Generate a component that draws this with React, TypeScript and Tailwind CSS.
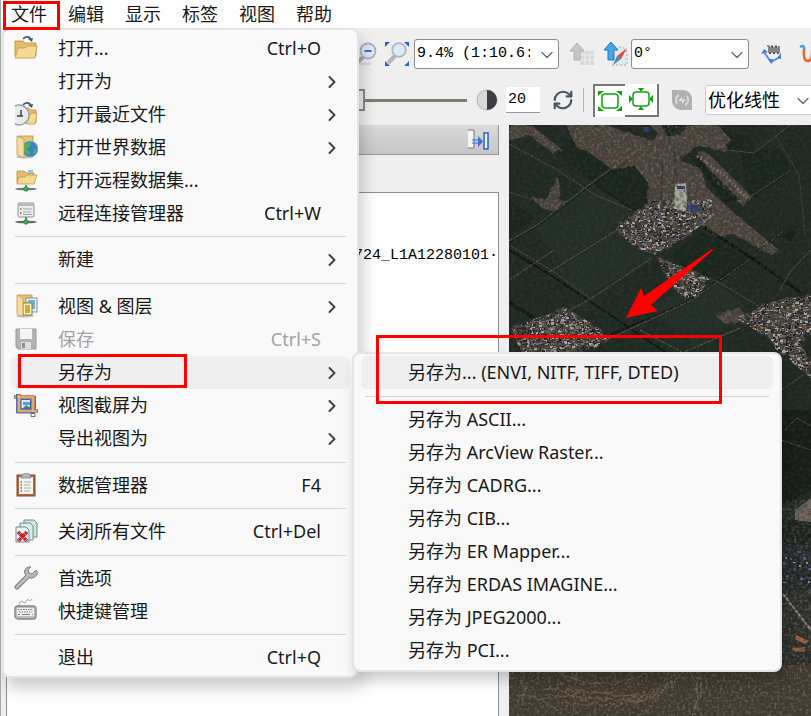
import React from "react";
import { ChevronDown, ChevronRight, RefreshCw } from "lucide-react";

type IconName =
  | "open" | "recent" | "world" | "remote" | "server" | "layers"
  | "save" | "crop" | "clipboard" | "closeAll" | "wrench" | "keyboard";

type Entry =
  | { kind: "rule"; wide?: boolean }
  | {
      kind: "item";
      label: string;
      icon?: IconName;
      keys?: string;
      sub?: boolean;
      disabled?: boolean;
      active?: boolean;
    };

const MENUS = ["文件", "编辑", "显示", "标签", "视图", "帮助"];

const FILE_MENU: Entry[] = [
  { kind: "item", label: "打开...", icon: "open", keys: "Ctrl+O" },
  { kind: "item", label: "打开为", sub: true },
  { kind: "item", label: "打开最近文件", icon: "recent", sub: true },
  { kind: "item", label: "打开世界数据", icon: "world", sub: true },
  { kind: "item", label: "打开远程数据集...", icon: "remote" },
  { kind: "item", label: "远程连接管理器", icon: "server", keys: "Ctrl+W" },
  { kind: "rule" },
  { kind: "item", label: "新建", sub: true },
  { kind: "rule", wide: true },
  { kind: "item", label: "视图 & 图层", icon: "layers", sub: true },
  { kind: "item", label: "保存", icon: "save", keys: "Ctrl+S", disabled: true },
  { kind: "item", label: "另存为", sub: true, active: true },
  { kind: "item", label: "视图截屏为", icon: "crop", sub: true },
  { kind: "item", label: "导出视图为", sub: true },
  { kind: "rule", wide: true },
  { kind: "item", label: "数据管理器", icon: "clipboard", keys: "F4" },
  { kind: "rule" },
  { kind: "item", label: "关闭所有文件", icon: "closeAll", keys: "Ctrl+Del" },
  { kind: "rule", wide: true },
  { kind: "item", label: "首选项", icon: "wrench" },
  { kind: "item", label: "快捷键管理", icon: "keyboard" },
  { kind: "rule" },
  { kind: "item", label: "退出", keys: "Ctrl+Q" },
];

const SAVE_AS_MENU: Entry[] = [
  { kind: "item", label: "另存为... (ENVI, NITF, TIFF, DTED)", active: true },
  { kind: "rule", wide: true },
  { kind: "item", label: "另存为 ASCII..." },
  { kind: "item", label: "另存为 ArcView Raster..." },
  { kind: "item", label: "另存为 CADRG..." },
  { kind: "item", label: "另存为 CIB..." },
  { kind: "item", label: "另存为 ER Mapper..." },
  { kind: "item", label: "另存为 ERDAS IMAGINE..." },
  { kind: "item", label: "另存为 JPEG2000..." },
  { kind: "item", label: "另存为 PCI..." },
];

function Folder() {
  return (
    <>
      <path d="M1 5h8l2 2h11v13H1z" fill="#e3bd6a" stroke="#b98f3f" strokeWidth=".8" />
      <path d="M4 12h7l2-2h10l-2 12H1z" fill="#f4d894" stroke="#c29a4b" strokeWidth=".8" />
    </>
  );
}

function MenuIcon({ name }: { name: IconName }) {
  return (
    <svg viewBox="0 0 24 24" className="size-6" fill="none" aria-hidden="true">
      {name === "open" && (
        <>
          <Folder />
          <path d="M9 3c2-3 7-3 8 1" stroke="#4a5a70" strokeWidth="1.6" />
          <path d="M14 3l5-1-1 4z" fill="#4a5a70" />
        </>
      )}
      {name === "recent" && (
        <>
          <path d="M9 6h6l2 2h5v13H9z" fill="#e3bd6a" stroke="#b98f3f" strokeWidth=".8" />
          <path d="M13 13h3l2-2h5l-2 11h-9z" fill="#f4d894" stroke="#c29a4b" strokeWidth=".8" />
          <path d="M9 3c2-3 7-3 8 1" stroke="#4a5a70" strokeWidth="1.6" />
          <path d="M14 3l5-1-1 4z" fill="#4a5a70" />
          <path d="M1 4a11 10 0 0 1 4-1 9.500 9.500 0 0 1 0 20 11 10 0 0 1-4-1z" fill="#e6ebeb" />
          <path d="M1 4q2-1 4-1a9.500 9.500 0 0 1 0 20q-2 0-4-1" stroke="#98a3a3" strokeWidth="1.4" />
          <path d="M7 8v6M3 14h6" stroke="#444" strokeWidth="1.500" />
        </>
      )}
      {name === "world" && (
        <>
          <ellipse cx="11" cy="22" rx="9" ry="1.500" fill="#8a8a8a" opacity=".5" />
          <path d="M4 1h15v18H7z" fill="#ecc77a" stroke="#b98f3f" strokeWidth=".8" />
          <circle cx="16" cy="14" r="8" fill="#3d83c4" stroke="#8ab6dc" strokeWidth=".7" />
          <path d="M13 8c3-2 5 0 4 2s-4 2-4 4 3 1 3 4-3 2-5-1-2-7 2-9zM20 14c2-1 3 1 2 3s-3 2-3 0z" fill="#4fb357" />
          <path d="M3 1l7 3v19l-7-3z" fill="#f6dc9c" stroke="#c29a4b" strokeWidth=".8" />
        </>
      )}
      {name === "remote" && (
        <>
          <path d="M3 3h7l2 2h8v10H3z" fill="#e3bd6a" stroke="#b98f3f" strokeWidth=".8" />
          <path d="M14 2h5v3h-5z" fill="#8cc3ea" />
          <path d="M5 9h6l2-2h10l-3 9H3z" fill="#f4d894" stroke="#c29a4b" strokeWidth=".8" />
          <path d="M12 17v4" stroke="#555" strokeWidth="1.400" />
          <ellipse cx="12" cy="21" rx="11" ry="1.300" fill="#777" />
          <circle cx="12" cy="21" r="2.300" fill="#35b34a" stroke="#20702e" strokeWidth=".6" />
        </>
      )}
      {name === "server" && (
        <>
          <rect x="4" y="2" width="16" height="14" rx="1" fill="#e9ebec" stroke="#8f9496" />
          <path d="M5 4h14" stroke="#b6babc" strokeWidth="2" />
          <path d="M9 8h9M9 11h8M9 13.500h9" stroke="#9a9fa2" strokeWidth=".9" />
          <path d="M6 8h1.500" stroke="#3b9b45" strokeWidth="1.600" />
          <path d="M6 12h1.500" stroke="#d03c3c" strokeWidth="1.600" />
          <path d="M12 16v5" stroke="#555" strokeWidth="1.600" />
          <ellipse cx="12" cy="21" rx="11" ry="1.300" fill="#666" />
          <circle cx="12" cy="21" r="2.300" fill="#35b34a" stroke="#20702e" strokeWidth=".6" />
        </>
      )}
      {name === "layers" && (
        <>
          <ellipse cx="11" cy="22" rx="9" ry="1.500" fill="#8a8a8a" opacity=".5" />
          <path d="M4 1h14v17H6z" fill="#e8c276" stroke="#b98f3f" strokeWidth=".8" />
          <rect x="12" y="4" width="11" height="14" fill="#e8f1f6" stroke="#7d95a6" />
          <rect x="14" y="6" width="7" height="9" fill="#6fb2d8" />
          <rect x="9" y="9" width="9" height="12" fill="#fff4c4" stroke="#8c7c38" />
          <path d="M11 11h5v8h-5z" fill="#d5a82a" />
          <path d="M3 1l6 3v19l-6-3z" fill="#f6dc9c" stroke="#c29a4b" strokeWidth=".8" />
        </>
      )}
      {name === "save" && (
        <>
          <path d="M2 2h20v20H4l-2-2z" fill="#b3b3b3" stroke="#9a9a9a" />
          <rect x="6" y="2" width="12" height="10" fill="#f3f3f3" />
          <rect x="7" y="15" width="10" height="7" fill="#dedede" />
          <rect x="8" y="16" width="3" height="5" fill="#8e8e8e" />
        </>
      )}
      {name === "crop" && (
        <>
          <rect x="7" y="7" width="11" height="10" fill="#d9ecf6" />
          <path d="M8 16l4-4 3 2 2-2v4z" fill="#3f8a6a" />
          <path d="M9 9h7v3H9z" fill="#5c9ed0" />
          <path d="M0 4h19v16M5 1v17h19" stroke="#a8683a" strokeWidth="3.600" />
          <path d="M1 4h18v15M5 2v16h18" stroke="#eebc88" strokeWidth="1.600" />
          <path d="M7 7v9h9.500V6.500H7" stroke="#3a62b4" />
          <path d="M2.500 1v19h17M21.500 3v13M17 20.500h4v3h-4z" stroke="#3c62ad" strokeWidth=".9" />
        </>
      )}
      {name === "clipboard" && (
        <>
          <rect x="3" y="2" width="18" height="21" fill="#b3683c" stroke="#84472a" />
          <path d="M5 4h14v17H5z" fill="#f5f5f2" />
          <path d="M8 2c0-2 8-2 8 0l1 3H7z" fill="#b5b8ba" stroke="#818487" strokeWidth=".8" />
          <path d="M10 9h7M10 12h6M10 15h7M10 18h6" stroke="#9a9a9a" strokeWidth=".8" />
          <path d="M6.500 9H8" stroke="#3a9a44" strokeWidth="1.600" />
          <path d="M6.500 12H8M6.500 18H8" stroke="#d0473c" strokeWidth="1.600" />
          <path d="M6.500 15H8" stroke="#3b62c4" strokeWidth="1.600" />
        </>
      )}
      {name === "closeAll" && (
        <>
          <path d="M10 1h10l3 3v14H10z" fill="#cfe3e3" stroke="#6f8c8c" />
          <path d="M6 4h10l3 3v14H6z" fill="#d9ebeb" stroke="#6f8c8c" />
          <path d="M2 8h10l3 3v12H2z" fill="#e6f3f3" stroke="#6f8c8c" />
          <path d="M4 13l9 9M13 13l-9 9" stroke="#c8232b" strokeWidth="3.600" strokeDasharray="2.500 .4" />
        </>
      )}
      {name === "wrench" && (
        <>
          <path d="M3 21L15 9" stroke="#7d7d7d" strokeWidth="5" strokeLinecap="round" />
          <path d="M22 4l-4 4-3-1-1-3 3-3c-4-1-8 3-6 7s7 6 11 2c2-2 2-4 0-6z" fill="#b4b4b4" stroke="#7d7d7d" strokeWidth=".9" />
          <path d="M3 21L15 9" stroke="#bdbdbd" strokeWidth="3" strokeLinecap="round" />
        </>
      )}
      {name === "keyboard" && (
        <>
          <path d="M5 7c0-4 2-6 4-4s3 0 4-2 3 3 5-1" stroke="#9b9b9b" />
          <rect x="1" y="7" width="21" height="13" rx="3" fill="#bdbdbd" stroke="#858585" strokeWidth="1.300" />
          <rect x="3" y="9" width="17" height="8" rx="1" fill="#ededed" />
          <path d="M4 10.500h15M5 13h13" stroke="#808080" strokeWidth="1.200" strokeDasharray="1.500 1" />
          <path d="M4 15.500h2M8 15.500h8M18 15.500h1" stroke="#808080" strokeWidth="1.200" />
        </>
      )}
    </svg>
  );
}

function MenuRows({ entries }: { entries: Entry[] }) {
  return (
    <>
      {entries.map((e, i) =>
        e.kind === "rule" ? (
          <div
            key={i}
            role="separator"
            className={e.wide ? "mx-1 flex h-[14px] items-center" : "mx-1 flex h-[13px] items-center"}
          >
            <div className="h-px flex-1 bg-[#d6d6d6]" />
          </div>
        ) : (
          <button
            key={i}
            type="button"
            role="menuitem"
            disabled={e.disabled}
            className={
              "flex h-[33px] w-full items-center rounded-md pb-0.5 pl-[3px] text-left text-lg leading-6 whitespace-nowrap " +
              (e.active ? "bg-[#efefef] " : "") +
              (e.disabled ? "text-[#a3a3a3]" : "text-[#1a1a1a]")
            }
          >
            <span className="mr-5 w-6 shrink-0">{e.icon && <MenuIcon name={e.icon} />}</span>
            <span className="flex-1">{e.label}</span>
            {e.keys && <span className="mr-[29px]">{e.keys}</span>}
            {e.sub && <ChevronRight className="mt-0.5 mr-2 size-5 text-[#444]" strokeWidth={2.4} />}
          </button>
        )
      )}
    </>
  );
}

/* Deterministic pseudo-random numbers, so the terrain looks the same on each render. */
function makeRandom(seed: number) {
  let s = seed;
  return () => {
    s = (s * 16807) % 2147483647;
    return s / 2147483647;
  };
}

/* One path of small roof-sized blocks per colour, scattered over the whole map. */
const HOUSE_COLORS = ["#8a837b", "#2f3a66", "#6b6259", "#1b1b1b", "#5a4d44", "#77706a", "#262626", "#aaa6a2", "#3a3530"];
const HOUSES = HOUSE_COLORS.map((color, k) => {
  const r = makeRandom(77 + k * 991);
  let d = "";
  for (let i = 0; i < 2200; i++) {
    const x = 509 + Math.floor(r() * 302);
    const y = 190 + Math.floor(r() * 190);
    const w = 1 + Math.floor(r() * 3);
    const h = 1 + Math.floor(r() * 2);
    d += `M${x} ${y}h${w}v${h}h-${w}z`;
  }
  return { color, d };
});

const VILLAGES =
  "M614 229l38-28 60-2 2 16-18 14-40 26-20-7zM656 256l14 6 40 16-12 18-14 2-12-12-10-18zM510 328l56-20 34 21 8 12-42 20h-40zM736 318l36-16 39-7v38l-20 14-20-7zM766 330l30 8 15 22v18l-36-30z";

const SOIL =
  "M509 125h22l30 24-8 4-24-18-20 6zM566 125h38l50 16 4-8-8-8h68l12 14-6 12-28-6-16 16 22 8 4 18 28 26 46 38-8 4-38-20-18 2-20-16-8-2-2-10-16-2-14 14-10-2 2-36-14-18-20 6-24-18-14-6zM697 152l12 2 44 44-12 6-24-20zM531 197l16 2 10-22 4 14-4 8 12 2-16 10-10-2zM714 315l26-8 8 14-24 2z";

const ROADS: { d: string; w: number; c: string }[] = [
  { d: "M509 144l47 25 39 26 44 18", w: 1, c: "#5b5248" },
  { d: "M509 241l28-16 57-44 42-30", w: 1, c: "#665c50" },
  { d: "M509 243l28-16 57-44 42-28", w: 1, c: "#10150f" },
  { d: "M509 250l40 24 39 26 77 52", w: 2, c: "#0c110d" },
  { d: "M511 246l40 24 39 28", w: 1, c: "#544c43" },
  { d: "M549 272l70-43", w: 1, c: "#6a6054" },
  { d: "M509 280l45-30M570 310l22-12 60-40", w: 1, c: "#665c50" },
  { d: "M588 344l100-42 60-42 33-27", w: 2, c: "#0c110d" },
  { d: "M600 343l90-42 60-42 33-28", w: 1, c: "#6a6054" },
  { d: "M715 280l42 25 20 18", w: 1, c: "#59514a" },
  { d: "M745 200l46-30M790 125l-36 28-28-3", w: 1, c: "#5a5248" },
  { d: "M775 135l24 40 6 60", w: 1, c: "#3e453d" },
  { d: "M704 227l52 34 45 32", w: 3, c: "#0c110d" },
  { d: "M509 302l34 22", w: 4, c: "#0f150f" },
  { d: "M780 290l10-18 21-22", w: 1, c: "#625a4f" },
  { d: "M509 192l24 8", w: 1, c: "#4b4239" },
  { d: "M594 183l50 34", w: 1, c: "#0c110d" },
  { d: "M640 330l42 22M740 328l-56 24", w: 1, c: "#6a6054" },
  { d: "M785 430l12-12 14 8M781 390l30-20M781 440l30 10", w: 1, c: "#55504a" },
];

function SatelliteMap() {
  return (
    <svg
      viewBox="509 125 302 591"
      preserveAspectRatio="xMinYMin slice"
      className="block h-full w-full"
      role="img"
      aria-label="卫星影像"
    >
      <defs>
        <filter id="light" x="0" y="0" width="100%" height="100%">
          <feTurbulence type="fractalNoise" baseFrequency="0.35" numOctaves="3" seed="4" />
          <feColorMatrix values="0 0 0 0 0.6  0 0 0 0 0.53  0 0 0 0 0.46  2.4 0 0 0 -1.1" />
        </filter>
        <filter id="dark" x="0" y="0" width="100%" height="100%">
          <feTurbulence type="fractalNoise" baseFrequency="0.25" numOctaves="3" seed="9" />
          <feColorMatrix values="0 0 0 0 0.04  0 0 0 0 0.05  0 0 0 0 0.04  3 0 0 0 -1.3" />
        </filter>
        <filter id="rough">
          <feTurbulence type="fractalNoise" baseFrequency="0.15" numOctaves="2" seed="3" />
          <feDisplacementMap in="SourceGraphic" scale="8" />
        </filter>
        <clipPath id="villages">
          <path d={VILLAGES} />
        </clipPath>
        <clipPath id="bare">
          <path d={SOIL + "M509 660h302v56H509zM781 500h30v160h-30z"} />
        </clipPath>
      </defs>
      <rect x="509" y="125" width="302" height="591" fill="#1f2922" />
      <path d="M557 155l15-20 50 25-30 20zM594 183l42-28 22 12-6 40-12 10zM669 255l35-24 46 30-44 32zM740 150h40l14 20-44 30z" fill="#19251c" />
      <path d="M536 228l54-44 48 32-74 50zM648 306l64-30 38 34-52 40zM554 272l60-42 40 28-70 40z" fill="#212d25" />
      <path d="M509 200l26 18-26 20zM720 130l30 6 4 12-26 2z" fill="#1a241c" />
      <path d={SOIL} fill="#4c423a" filter="url(#rough)" />
      <path d="M692 160l6-2 42 42-14 2zM662 125h26l-8 10-14 1zM783 229l14-3-4 16-10-4z" fill="#17211a" />
      <path d="M781 410h30v80l-30 16z" fill="#161c17" />
      <path d="M781 520h30v30h-30z" fill="#1a201b" />
      <path d="M795 510l16-12v24l-16-2z" fill="#6a5f57" />
      <path d="M781 545h30v50h-30z" fill="#222527" />
      <path d="M781 590h30v80h-30z" fill="#2b2b27" />
      {ROADS.map((r, i) => (
        <path key={i} d={r.d} stroke={r.c} strokeWidth={r.w} fill="none" strokeDasharray="4 1 2 1" />
      ))}
      <path d="M663 160l-2 40M674 145l2 30" stroke="#2d2823" fill="none" />
      <path d="M697 156l28 20 24 24" stroke="#75685c" strokeWidth="3" strokeDasharray="2 2" fill="none" />
      <path d={VILLAGES} fill="#4c443e" filter="url(#rough)" />
      <g clipPath="url(#villages)">
        {HOUSES.map((h) => (
          <path key={h.color} d={h.d} fill={h.color} />
        ))}
      </g>
      <path d="M783 562h3v3h-3zM790 558h2v2h-2zM797 551h4v2h-4zM803 557h3v3h-3zM808 568h3v2h-3zM786 575h3v2h-3zM800 578h4v2h-4zM794 568h2v3h-2z" fill="#4457a0" />
      <path d="M785 557h2v2h-2zM793 562h3v1h-3zM799 565h2v2h-2zM806 562h2v2h-2zM783 582h3v1h-3zM808 581h2v2h-2z" fill="#99979a" />
      <path d="M675 184l11-1 1 20 3 8-16-2z" fill="#a5a698" />
      <path d="M677 186h8v3h-8z" fill="#26376f" />
      <path d="M687 203l13 2v7l-14-1z" fill="#323a6b" />
      <path d="M643 127h6v5h-6z" fill="#2c3a66" />
      <path d="M783 594l28 36" stroke="#8c9095" strokeWidth="2" strokeDasharray="4 1" />
      <path d="M509 665h302v51H509z" fill="#42392f" />
      <path d="M796 635l13 6-4 3-10-5zM792 648l13-1v5l-12-1z" fill="#9a5d3c" />
      <rect x="509" y="125" width="302" height="591" filter="url(#light)" opacity=".05" />
      <rect x="509" y="125" width="302" height="591" filter="url(#dark)" opacity=".3" />
      <g clipPath="url(#bare)">
        <rect x="509" y="125" width="302" height="591" filter="url(#light)" opacity=".3" />
        <rect x="509" y="125" width="302" height="591" filter="url(#dark)" opacity=".4" />
      </g>
      <g fill="none" stroke="#73624e" strokeWidth="1" filter="url(#rough)">
        <path d="M556 671q35 20 75 8t22-12M540 688q60 4 90 8t40-28M560 702q70 8 95-8t35-26M577 671l-4 45M520 676q10 14 0 34M690 671q14 24 2 45M640 716q20-18 34-44" />
        <path d="M545 696q60 4 92 4t42-32M700 676q4 20-8 40M515 700q20-10 44 12" />
        <path d="M720 680q20 10 60 4M730 700q30-10 80 2M700 714q40-14 70 0" stroke="#574b3f" />
      </g>
    </svg>
  );
}

function PickList({ label, value, className }: { label: string; value: string; className: string }) {
  return (
    <div className={"relative h-[30px] shrink-0 " + className}>
      <select
        aria-label={label}
        className="h-full w-full appearance-none rounded-[3px] border border-[#8e8e8e] bg-white pr-7 pl-[2px] text-black"
      >
        <option>{value}</option>
      </select>
      <ChevronDown className="pointer-events-none absolute top-1.5 right-0.5 size-5 text-[#6a6a6a]" strokeWidth={1.6} />
    </div>
  );
}

function ToolButton({ label, children, className = "" }: { label: string; children: React.ReactNode; className?: string }) {
  return (
    <button type="button" aria-label={label} className={"flex shrink-0 items-center justify-center " + className}>
      {children}
    </button>
  );
}

function ViewToolbar() {
  return (
    <div className="flex h-[52px] items-center overflow-hidden pl-[355px]">
      <ToolButton label="缩小">
        <svg viewBox="0 0 24 28" className="h-7 w-6" fill="none">
          <path d="M1 24h14" stroke="#dadada" strokeWidth="3" />
          <path d="M7 17l-5 5" stroke="#aaa" strokeWidth="4" />
          <circle cx="12" cy="11" r="7.500" fill="#dcebf8" stroke="#a9b2bd" strokeWidth="1.800" />
          <path d="M8.500 11h7" stroke="#2f5fc8" strokeWidth="1.800" />
        </svg>
      </ToolButton>
      <ToolButton label="缩放至全图" className="ml-1">
        <svg viewBox="0 0 26 26" className="size-[26px]" fill="none">
          <path d="M1 1h5L1 6zM25 1h-5l5 5zM1 25h5l-5-5zM25 25h-5l5-5z" fill="#2f5fd8" />
          <path d="M12 14l-8 8" stroke="#b5b5b5" strokeWidth="4" />
          <circle cx="15" cy="9" r="6.800" fill="#dcebf8" stroke="#b0b8c0" strokeWidth="1.800" />
        </svg>
      </ToolButton>
      <PickList label="缩放比例" value="9.4% (1:10.6:" className="ml-1 w-[145px] font-['Liberation_Mono',monospace] text-[15px]" />
      <ToolButton label="上移图层" className="ml-2.5">
        <svg viewBox="0 0 26 26" className="size-[26px]" fill="none">
          <path d="M11 10h14v14H11z" fill="#d9d9d9" />
          <path d="M11 14h14M11 19h14M16 9v15M21 9v15" stroke="#ededed" />
          <path d="M8 2l7 8h-4v9H5v-9H1z" fill="#c6c6c6" stroke="#b0b0b0" />
        </svg>
      </ToolButton>
      <ToolButton label="北方朝上" className="ml-2">
        <svg viewBox="0 0 26 26" className="size-[26px]" fill="none">
          <path d="M6 12l6-6h8l4 5v13H10z" fill="#e3e9ea" />
          <path d="M9 24h15V11q-2-5-8-5" stroke="#9fb0b0" strokeDasharray="2 2" />
          <path d="M24 7l-6 11-4-3z" fill="#e0503c" />
          <path d="M14 15l4 3-8 6z" fill="#4a86c4" />
          <path d="M8 1l7 8h-4v10H5V9H1z" fill="#45a5e6" stroke="#2478bd" />
        </svg>
      </ToolButton>
      <PickList label="旋转角度" value="0°" className="ml-0.5 w-[118px] font-['Liberation_Mono',monospace] text-[15px]" />
      <ToolButton label="测量" className="ml-3">
        <svg viewBox="0 0 22 24" className="h-6 w-[22px]" fill="none">
          <path d="M3 10l7 10 9-5" stroke="#5a86e4" strokeWidth="1.800" />
          <path d="M0 12l3-5 4 3zM20 11v6l-4-1zM7 17l5 0-1 5z" fill="#4a7be0" />
          <path d="M6 4q3-1 2 3v3q1 3 2 0V6q1-4 2 0v4q1 3 2 0V6q1-4 2 0v4q1 3 2 0V4" stroke="#4c4c4c" strokeWidth="1.300" />
        </svg>
      </ToolButton>
      <ToolButton label="光谱剖面" className="ml-4">
        <svg viewBox="0 0 24 24" className="size-6" fill="none">
          <path d="M1 5q5-3 4 4" stroke="#4a9be0" strokeWidth="2.500" />
          <path d="M5 8q-1 11 4 11t4-15" stroke="#e8662c" strokeWidth="2.500" />
        </svg>
      </ToolButton>
    </div>
  );
}

function StretchToolbar() {
  return (
    <div className="flex h-10 items-center overflow-hidden pl-[60px]">
      <input
        type="range"
        aria-label="对比度"
        min={0}
        max={100}
        defaultValue={74}
        className="h-6 w-[406px] shrink-0 appearance-none bg-[linear-gradient(#807c72,#807c72)] bg-[length:100%_3px] bg-center bg-no-repeat [&::-webkit-slider-thumb]:h-[22px] [&::-webkit-slider-thumb]:w-3 [&::-webkit-slider-thumb]:appearance-none [&::-webkit-slider-thumb]:border-2 [&::-webkit-slider-thumb]:border-[#8a8a8a] [&::-webkit-slider-thumb]:bg-[#eee]"
      />
      <svg viewBox="0 0 22 22" className="ml-[9px] size-[22px] shrink-0" aria-hidden="true">
        <circle cx="11" cy="11" r="10" fill="#d9d9d9" stroke="#b5b5b5" />
        <path d="M11 1a10 10 0 0 1 0 20z" fill="#3c3d45" />
      </svg>
      <input
        type="text"
        aria-label="对比度数值"
        defaultValue="20"
        className="ml-2 h-[26px] w-[34px] shrink-0 border-b border-[#999] bg-white pl-0.5 font-['Liberation_Mono',monospace] text-[15px] text-black"
      />
      <ToolButton label="重置" className="ml-3">
        <RefreshCw className="size-[22px] text-[#4a5563]" strokeWidth={2.4} />
      </ToolButton>
      <div className="mx-[9px] h-6 w-px shrink-0 bg-[#b5b5b5]" />
      <ToolButton label="按视图拉伸" className="h-[33px] w-8 border-t-2 border-l-2 border-[#777] bg-white">
        <svg viewBox="0 0 24 22" className="h-[22px] w-6" fill="none">
          <path d="M0 1h6L0 6zM24 1h-6l6 5zM0 21h6l-6-5zM24 21h-6l6-5z" fill="#12a512" />
          <rect x="4" y="4" width="16" height="14" rx="3" stroke="#12a512" strokeWidth="1.500" />
        </svg>
      </ToolButton>
      <ToolButton label="按全图拉伸" className="h-[33px] w-[34px] border-r-2 border-b-2 border-[#777] bg-white">
        <svg viewBox="0 0 24 22" className="h-[22px] w-6" fill="none">
          <path d="M9 0h6l-3 4zM9 22h6l-3-4zM0 7v8l4-4zM24 7v8l-4-4z" fill="#12a512" />
          <rect x="4" y="4" width="16" height="14" rx="3" stroke="#12a512" strokeWidth="1.500" />
        </svg>
      </ToolButton>
      <ToolButton label="更新拉伸" className="ml-3">
        <svg viewBox="0 0 22 22" className="size-[22px]" fill="none">
          <path d="M1 1h11a9 9 0 0 1 9 9v11H10a9 9 0 0 1-9-9z" fill="#b0b0b0" />
          <path d="M6 15a6 6 0 0 1 2-9M16 7a6 6 0 0 1-2 9" stroke="#d8d8d8" strokeWidth="2" />
          <path d="M7 12l4-4v3l4-1-4 5v-3z" fill="#e6e6e6" />
        </svg>
      </ToolButton>
      <PickList label="拉伸方式" value="优化线性" className="ml-3 w-[110px] text-lg [&>select]:border-[#ccc]" />
    </div>
  );
}

export default function App() {
  return (
    <div className="relative flex min-h-screen flex-col overflow-hidden border-l border-[#a8a8a8] bg-[#efefef] font-['Noto_Sans','Noto_Sans_CJK_SC',sans-serif]">
      <nav className="flex h-7 shrink-0 items-center bg-white pl-2.5">
        <div className="flex gap-[21px]">
          {MENUS.map((m) => (
            <button key={m} type="button" className="text-lg leading-6 text-[#1a1a1a]">
              {m}
            </button>
          ))}
        </div>
      </nav>

      <ViewToolbar />
      <StretchToolbar />

      <main className="mt-[5px] flex flex-1">
        <section className="flex w-[508px] shrink-0 flex-col pr-2.5 pl-[5px]">
          <header className="flex h-[30px] items-center justify-end border-r border-b border-[#999] bg-linear-to-b from-[#dadada] to-[#c6c6c6] pr-2">
            <ToolButton label="收起图层面板">
              <svg viewBox="0 0 22 22" className="size-[22px]" fill="none">
                <path d="M0 1h6v18H0z" fill="#f5f5f5" />
                <path d="M0 1h6v18H0" stroke="#777" />
                <path d="M4 11h8M4 14h8" stroke="#3c6ee0" />
                <path d="M10 7l5 5.500-5 5.500z" fill="#3c6ee0" />
                <rect x="16" y="4" width="4" height="16" fill="#eaf1ff" stroke="#2f5fd8" strokeWidth="1.500" />
              </svg>
            </ToolButton>
          </header>
          <div className="mt-[37px] flex-1 overflow-hidden border border-b-0 border-[#8b8f98] bg-white pt-[52px]">
            <p className="text-right font-['Liberation_Mono',monospace] text-[15px] leading-[22px] text-black">
              724_L1A12280101·
            </p>
          </div>
        </section>
        <section className="min-w-0 flex-1">
          <SatelliteMap />
        </section>
      </main>

      <div
        role="menu"
        aria-label="文件"
        className="absolute top-7 left-[1px] w-[357px] rounded-lg border-2 border-[#e4e4e4] bg-[#f9f9f9] px-[7px] py-0.5 shadow-[4px_10px_16px_rgba(0,0,0,0.2)]"
      >
        <MenuRows entries={FILE_MENU} />
      </div>

      <div
        role="menu"
        aria-label="另存为"
        className="absolute top-[352px] left-[351px] w-[430px] rounded-lg border-2 border-[#e4e4e4] bg-[#f9f9f9] px-[7px] pt-0.5 pb-[3px] shadow-[4px_8px_14px_rgba(0,0,0,0.2)]"
      >
        <MenuRows entries={SAVE_AS_MENU} />
      </div>

      <div className="pointer-events-none absolute top-px left-0.5 h-[29px] w-[57px] border-3 border-[#ff0000]" />
      <div className="pointer-events-none absolute top-[354px] left-[17px] h-[34px] w-[169px] border-3 border-[#ff0000]" />
      <div className="pointer-events-none absolute top-[335px] left-[375px] h-[69px] w-[346px] border-3 border-[#ff0000]" />
      <svg
        viewBox="0 0 88 70"
        className="pointer-events-none absolute top-[249px] left-[625px] h-[70px] w-[88px]"
        aria-hidden="true"
      >
        <path d="M0 69L15 39l3 8L86 0q2 0 0 2L25 56l7 6z" fill="#ff0000" />
      </svg>
    </div>
  );
}
